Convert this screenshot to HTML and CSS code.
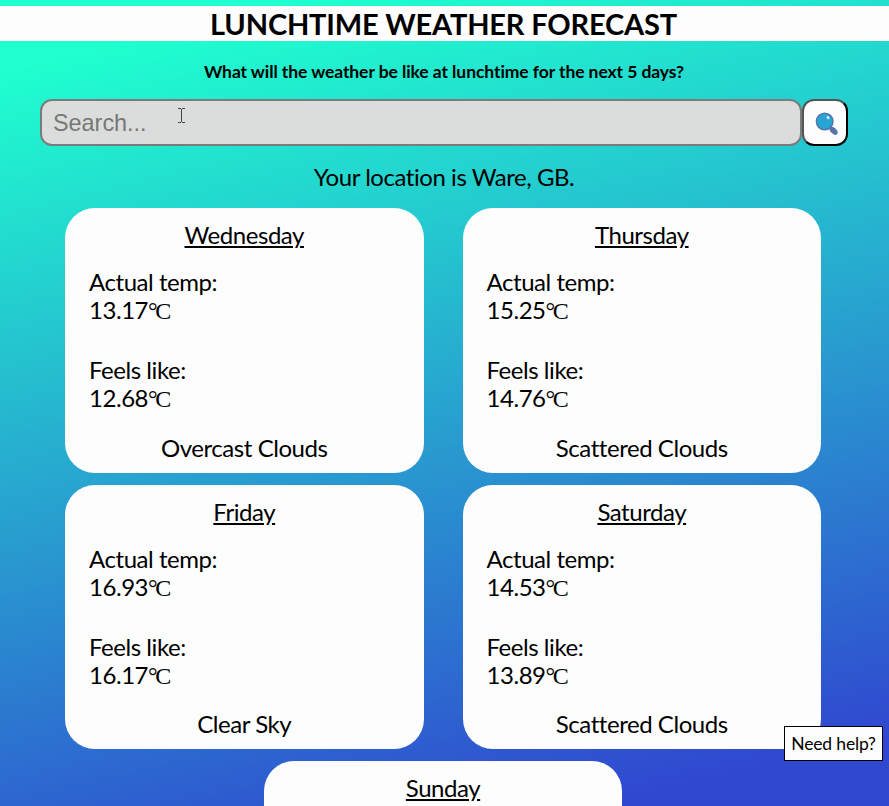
FILE: index.html
```html
<!DOCTYPE html>
<html lang="en">
<head>
<meta charset="utf-8">
<title>Lunchtime Weather Forecast</title>
<link rel="stylesheet" href="styles.css">
</head>
<body>
<h1 class="title">LUNCHTIME WEATHER FORECAST</h1>
<h2 class="subtitle">What will the weather be like at lunchtime for the next 5 days?</h2>
<form class="search">
  <input class="search-input" type="text" placeholder="Search...">
  <button class="search-button" type="button" aria-label="Search">
    <svg width="24" height="24" viewBox="0 0 24 24">
      <ellipse cx="18.6" cy="18.8" rx="4.8" ry="2.9" fill="#5873a8" transform="rotate(45 18.6 18.8)"/>
      <path d="M14 14l3 3" stroke="#5873a8" stroke-width="2.5"/>
      <circle cx="9.7" cy="9.5" r="8.3" fill="#27a5d4" stroke="#5578a8" stroke-width="1.5"/>
      <ellipse cx="13" cy="5.6" rx="1.3" ry="1.8" fill="#e8faff" transform="rotate(-35 13 5.6)"/>
    </svg>
  </button>
</form>
<p class="location">Your location is Ware, GB.</p>
<main class="cards">
  <section class="card">
    <h3 class="day">Wednesday</h3>
    <p class="reading">Actual temp:<br>13.17<span class="unit"><span class="degree">°</span>C</span></p>
    <p class="reading">Feels like:<br>12.68<span class="unit"><span class="degree">°</span>C</span></p>
    <p class="sky">Overcast Clouds</p>
  </section>
  <section class="card">
    <h3 class="day">Thursday</h3>
    <p class="reading">Actual temp:<br>15.25<span class="unit"><span class="degree">°</span>C</span></p>
    <p class="reading">Feels like:<br>14.76<span class="unit"><span class="degree">°</span>C</span></p>
    <p class="sky">Scattered Clouds</p>
  </section>
  <section class="card">
    <h3 class="day">Friday</h3>
    <p class="reading">Actual temp:<br>16.93<span class="unit"><span class="degree">°</span>C</span></p>
    <p class="reading">Feels like:<br>16.17<span class="unit"><span class="degree">°</span>C</span></p>
    <p class="sky">Clear Sky</p>
  </section>
  <section class="card">
    <h3 class="day">Saturday</h3>
    <p class="reading">Actual temp:<br>14.53<span class="unit"><span class="degree">°</span>C</span></p>
    <p class="reading">Feels like:<br>13.89<span class="unit"><span class="degree">°</span>C</span></p>
    <p class="sky">Scattered Clouds</p>
  </section>
  <section class="card">
    <h3 class="day">Sunday</h3>
  </section>
</main>
<a class="help">Need help?</a>
<svg class="cursor" width="7" height="15" viewBox="0 0 7 15"><path d="M0 .5h3M4 .5h3M3.5 1v13M0 14.5h3M4 14.5h3" stroke="#444" fill="none"/></svg>
</body>
</html>
```
FILE: styles.css
```css
* { box-sizing: border-box; }
html { height: 100%; overflow: hidden; }
body {
  height: 100%;
  margin: 0;
  padding-top: 6px;
  overflow: hidden;
  font-family: Lato, sans-serif;
  font-size: 24px;
  line-height: 28px;
  letter-spacing: -0.45px;
  color: #000;
  background: linear-gradient(166.5deg, #1fffcf 7%, #3048d0 93%) fixed;
}
.title {
  margin: 0;
  padding-right: 2px;
  background: #fdfdfd;
  font-size: 29px;
  line-height: 35px;
  font-weight: 700;
  letter-spacing: -0.17px;
  text-align: center;
}
.subtitle {
  margin: 20px 0 0;
  padding-right: 1px;
  font-size: 17.5px;
  line-height: 22px;
  font-weight: 700;
  letter-spacing: -0.08px;
  text-align: center;
}
.search {
  display: flex;
  margin: 16px 40px 0;
}
.search-input {
  width: 762px;
  height: 47px;
  padding: 1px 11px 0;
  border: 2px solid #7b7b7b;
  border-radius: 12px;
  background: #dbdddc;
  font: 23.4px "Liberation Sans", sans-serif;
}
.search-input::placeholder { color: #777; }
.search-button {
  display: flex;
  align-items: center;
  justify-content: center;
  width: 46px;
  height: 47px;
  padding: 2px 0 0 3px;
  border: 2px outset #000;
  border-radius: 12px;
  background: #fdfdfd;
}
.location {
  margin: 17px 0 17.4px;
  padding-right: 1px;
  text-align: center;
}
.cards {
  display: flex;
  flex-wrap: wrap;
  justify-content: center;
  gap: 12px 39px;
  margin-right: 3px;
}
.card {
  width: 358.5px;
  height: 264.2px;
  padding: 13px 24px;
  border-radius: 30px;
  background: #fdfdfd;
}
.day {
  margin: 0 0 19.1px;
  font-size: 24px;
  font-weight: 400;
  text-align: center;
  text-decoration: underline;
}
.reading { margin: 0 0 32px; }
.unit {
  font-family: "Liberation Serif", serif;
  line-height: 1;
}
.degree { letter-spacing: -2.5px; }
.sky {
  margin: -10.6px 0 0;
  text-align: center;
}
.help {
  position: fixed;
  right: 6px;
  bottom: 45px;
  width: 99px;
  height: 35px;
  border: 1px solid #000;
  background: #fdfdfd;
  font-size: 17.5px;
  line-height: 33px;
  letter-spacing: -0.15px;
  text-align: center;
}
.cursor {
  position: absolute;
  left: 178px;
  top: 108px;
}
```
